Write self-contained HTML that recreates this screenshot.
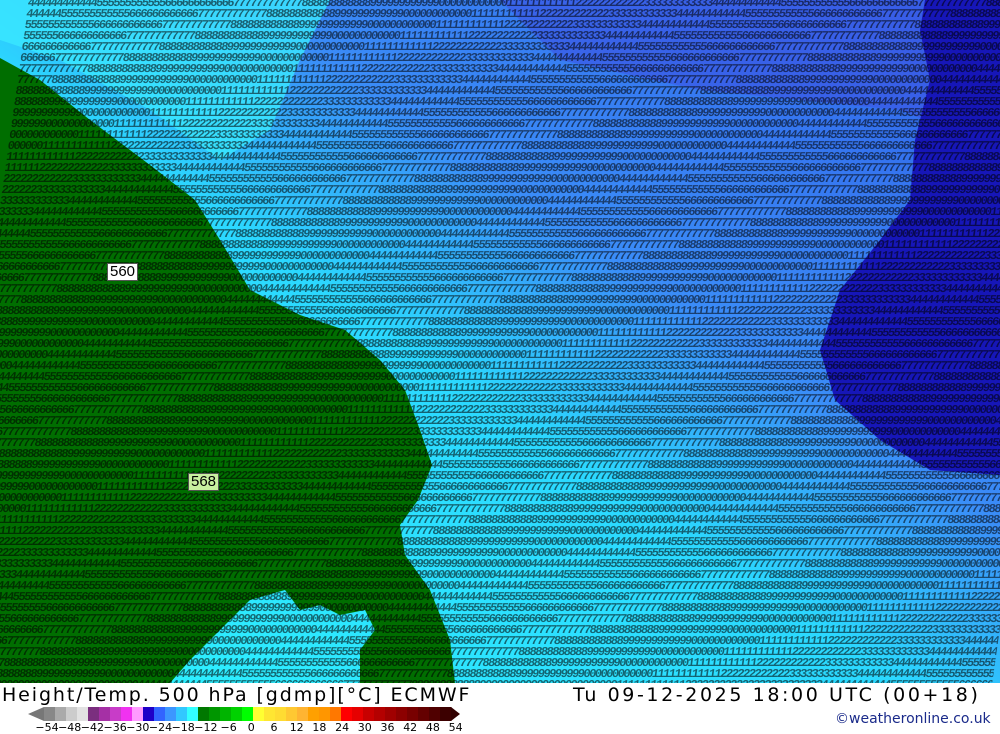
<!DOCTYPE html>
<html><head><meta charset="utf-8"><style>
body{margin:0;width:1000px;height:733px;overflow:hidden;background:#fff;font-family:"Liberation Sans",sans-serif;position:relative}
#map{position:absolute;left:0;top:0;width:1000px;height:683px;overflow:hidden}
#tx{position:absolute;left:-20px;top:-2px;width:1060px;height:690px;font:bold 12px/11px "Liberation Mono",monospace;color:#000;opacity:.55;white-space:pre;letter-spacing:-1.5px;transform:skewX(-8deg);overflow:hidden}
.lab{position:absolute;font:15px "Liberation Sans",sans-serif;padding:0 2px;border:1px solid #555;line-height:16px}
.t{position:absolute;font:19px "DejaVu Sans",sans-serif;color:#000;top:684px;white-space:pre}
.n{position:absolute;top:721px;font:11px 'DejaVu Sans',sans-serif;transform:translateX(-50%)}
</style></head><body>
<div id="map">
<svg width="1000" height="683" style="position:absolute;left:0;top:0">
<defs>
<linearGradient id="g" x1="0" y1="1" x2="1" y2="0">
<stop offset="0" stop-color="#2ef4ff"/><stop offset=".45" stop-color="#2bd8ff"/><stop offset=".62" stop-color="#3a8cf8"/><stop offset="1" stop-color="#3060e8"/>
</linearGradient>
</defs>
<rect width="1000" height="683" fill="url(#g)"/>
<polygon points="0,0 330,0 300,60 270,130 220,160 150,110 60,60 0,40" fill="#3ae8ff" opacity=".8"/>
<polygon points="500,0 1000,0 1000,150 900,110 700,90 560,60" fill="#3a5ae6" opacity=".7"/>
<polygon points="925,0 1000,0 1000,475 930,470 880,440 835,400 820,350 840,290 880,240 910,200 915,140 930,80 920,30" fill="#1616b8"/>
<polygon points="0,58 40,80 90,120 150,165 195,200 220,240 250,290 300,315 345,330 380,360 405,390 420,430 432,465 418,500 400,525 405,555 430,590 450,640 455,683 360,683 360,650 375,630 365,610 340,615 320,605 300,610 285,590 250,600 230,620 210,640 190,660 170,683 0,683" fill="#006e00"/>
</svg>
<div id="tx"></div>
<div class="lab" style="left:107px;top:263px;background:#fff">560</div>
<div class="lab" style="left:188px;top:473px;background:#c8f0a0">568</div>
</div>
<div class="t" style="left:2px;letter-spacing:1.9px">Height/Temp. 500 hPa [gdmp][°C] ECMWF</div>
<div class="t" style="left:573px;letter-spacing:2.6px">Tu 09-12-2025 18:00 UTC (00+18)</div>
<div style="position:absolute;left:835px;top:711px;font:14px 'DejaVu Sans',sans-serif;color:#1a2a8a">©weatheronline.co.uk</div>
<svg width="470" height="20" style="position:absolute;left:0;top:704px" id="cb"></svg>
<div id="nums"></div>
<script>
var c=["#888","#aaa","#ccc","#e2e2e2","#7b2f7f","#a530a5","#c83cc8","#f032f0","#ff9bff","#1e00c8","#3264ff","#3c96ff","#32c8ff","#32ffff","#007800","#009600","#00b400","#00d200","#00ff00","#ffff32","#ffe632","#ffdc32","#ffc832","#ffb432","#ffa000","#ff9600","#ff7800","#ff0000","#e60000","#c80000","#b40000","#a00000","#8c0000","#780000","#640000","#500000","#3c0000"];
var s='<polygon points="28,10 44,3 44,17" fill="#777"/>';
c.forEach(function(k,i){s+='<rect x="'+(44+i*11)+'" y="3" width="11.5" height="14" fill="'+k+'"/>';});
s+='<polygon points="451,3 460,10 451,17" fill="#300"/>';
document.getElementById('cb').innerHTML=s;
var L=["−54","−48","−42","−36","−30","−24","−18","−12","−6","0","6","12","18","24","30","36","42","48","54"],h="";
L.forEach(function(t,i){h+='<div class="n" style="left:'+(47+i*22.7)+'px">'+t+'</div>';});
document.getElementById('nums').innerHTML=h;
var d="4455667788990011223344556677889900",o="";
for(var r=0;r<64;r++){var l="";for(var j=0;j<200;j++)l+=d[(Math.floor(j/6)+r)%d.length];o+=l+"\n";}
document.getElementById('tx').textContent=o;
</script>
</body></html>
